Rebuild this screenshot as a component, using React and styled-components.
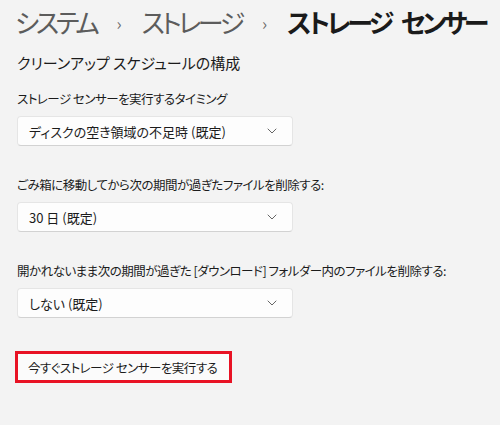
import React from 'react';
import styled, { createGlobalStyle } from 'styled-components';

const GlobalStyle = createGlobalStyle`
  html, body {
    margin: 0;
    padding: 0;
    background: #f3f3f3;
  }
  body {
    font-family: "Noto Sans CJK JP", "Noto Sans", sans-serif;
    font-feature-settings: "palt";
    color: #1b1b1b;
  }
`;

const Page = styled.div`
  width: 500px;
  height: 425px;
  overflow: hidden;
  padding: 0 0 0 17px;
  box-sizing: border-box;
`;

const Breadcrumb = styled.h1`
  display: flex;
  align-items: center;
  gap: 20px;
  margin: 0 0 0 -2px;
  height: 42px;
  font-size: 26px;
  font-weight: 400;
  letter-spacing: -3.3px;
  white-space: nowrap;
`;

const Crumb = styled.span`
  color: ${(p) => (p.$current ? '#1a1a1a' : '#5c5c5c')};
  font-weight: ${(p) => (p.$current ? 600 : 400)};
  word-spacing: 7px;
`;

const Sep = styled.span`
  color: #6b6b6b;
  font-size: 17px;
  margin-top: 2px;
  letter-spacing: 0;
`;

const SectionTitle = styled.h2`
  margin: 10px 0 0;
  font-size: 15px;
  font-weight: 400;
  line-height: 22px;
`;

const Field = styled.div`
  display: flex;
  flex-direction: column;
  gap: 8px;
  margin-top: ${(p) => p.$top}px;
`;

const Label = styled.div`
  font-size: 12.5px;
  line-height: 18px;
  letter-spacing: -0.5px;
  white-space: nowrap;
`;

const Dropdown = styled.div`
  width: 276px;
  height: 30px;
  box-sizing: border-box;
  display: flex;
  align-items: center;
  justify-content: space-between;
  padding: 0 15px 0 11px;
  background: #fdfdfd;
  border: 1px solid #e5e5e5;
  border-bottom-color: #d2d2d2;
  border-radius: 4px;
  font-size: 13px;
`;

const RunBox = styled.div`
  margin-top: 33px;
  margin-left: -2px;
  width: 217px;
  height: 32px;
  box-sizing: border-box;
  border: 3px solid #e81224;
  display: flex;
  align-items: center;
`;

const RunButton = styled.button`
  flex: 1;
  min-width: 0;
  height: 100%;
  border: none;
  background: #fbfbfb;
  font-family: inherit;
  font-feature-settings: "palt";
  font-size: 12.5px;
  letter-spacing: -0.5px;
  color: #1b1b1b;
  text-align: left;
  white-space: nowrap;
  overflow: hidden;
  padding: 0 0 0 10px;
`;

const Chevron = () => (
  <svg width="10" height="6" viewBox="0 0 10 6" fill="none">
    <path d="M1 1l4 4 4-4" stroke="#666" strokeWidth="1" strokeLinecap="round" strokeLinejoin="round" />
  </svg>
);

const fields = [
  { label: 'ストレージ センサーを実行するタイミング', value: 'ディスクの空き領域の不足時 (既定)', top: 16 },
  { label: 'ごみ箱に移動してから次の期間が過ぎたファイルを削除する:', value: '30 日 (既定)', top: 30 },
  { label: '開かれないまま次の期間が過ぎた [ダウンロード] フォルダー内のファイルを削除する:', value: 'しない (既定)', top: 30 },
];

export default function App() {
  return (
    <Page>
      <GlobalStyle />
      <Breadcrumb>
        <Crumb>システム</Crumb>
        <Sep>›</Sep>
        <Crumb>ストレージ</Crumb>
        <Sep>›</Sep>
        <Crumb $current>ストレージ センサー</Crumb>
      </Breadcrumb>
      <SectionTitle>クリーンアップ スケジュールの構成</SectionTitle>
      {fields.map((f) => (
        <Field key={f.label} $top={f.top}>
          <Label>{f.label}</Label>
          <Dropdown>
            <span>{f.value}</span>
            <Chevron />
          </Dropdown>
        </Field>
      ))}
      <RunBox>
        <RunButton>今すぐストレージ センサーを実行する</RunButton>
      </RunBox>
    </Page>
  );
}
